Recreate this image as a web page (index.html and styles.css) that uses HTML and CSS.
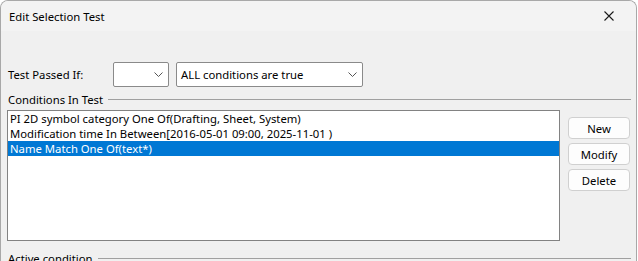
FILE: index.html
```html
<html lang="en">
<head>
    <meta charset="UTF-8">
    <meta name="viewport" content="width=device-width, initial-scale=1.0">
    <title>Edit Selection Test</title>
    <link rel="stylesheet" href="styles.css">
</head>
<body>
    <div class="window">
        <div class="titlebar">
            <span class="title">Edit Selection Test</span>
            <svg class="close" width="10" height="10" viewBox="0 0 10 10">
                <path d="M0.5 0.5 L9.5 9.5 M9.5 0.5 L0.5 9.5" stroke="#1a1a1a" stroke-width="1.1" fill="none"/>
            </svg>
        </div>
        <div class="content">
            <div class="pass-row">
                <span class="label">Test Passed If:</span>
                <div class="combo small">
                    <span class="combo-text"></span>
                    <svg class="chevron" width="9" height="5" viewBox="0 0 9 5"><path d="M0.5 0.5 L4.5 4.5 L8.5 0.5" stroke="#555" fill="none"/></svg>
                </div>
                <div class="combo wide">
                    <span class="combo-text">ALL conditions are true</span>
                    <svg class="chevron" width="9" height="5" viewBox="0 0 9 5"><path d="M0.5 0.5 L4.5 4.5 L8.5 0.5" stroke="#555" fill="none"/></svg>
                </div>
            </div>

            <div class="group-head">
                <span class="group-title">Conditions In Test</span>
                <span class="group-line"></span>
            </div>
            <div class="conditions">
                <div class="listbox">
                    <div class="list-item">PI 2D symbol category One Of(Drafting, Sheet, System)</div>
                    <div class="list-item">Modification time In Between[2016-05-01 09:00, 2025-11-01 )</div>
                    <div class="list-item selected">Name Match One Of(text*)</div>
                </div>
                <div class="actions">
                    <button class="btn">New</button>
                    <button class="btn">Modify</button>
                    <button class="btn">Delete</button>
                </div>
            </div>

            <div class="group-head active">
                <span class="group-title">Active condition</span>
                <span class="group-line"></span>
            </div>
        </div>
    </div>
</body>
</html>
```

FILE: styles.css
```css
body {
    margin: 0;
    padding: 0;
    background-color: #ffffff;
    font-family: "Segoe UI", "Noto Sans", Arial, sans-serif;
    font-size: 11.3px;
    line-height: 15px;
    color: #000000;
    overflow: hidden;
}

.window {
    box-sizing: border-box;
    width: 637px;
    height: 268px;
    border: 1px solid #a8a8a8;
    border-bottom: none;
    border-radius: 8px 8px 0 0;
    background-color: #f0f0f0;
    overflow: hidden;
}

.titlebar {
    height: 30px;
    background-color: #f3f3f3;
    display: flex;
    align-items: center;
    justify-content: space-between;
    padding: 0 22px 0 8px;
}

.title {
    font-size: 11.3px;
    color: #000000;
}

.content {
    padding: 0 5px 0 6px;
}

.pass-row {
    display: flex;
    align-items: center;
    margin-top: 31px;
    height: 25px;
}

.pass-row .label {
    width: 105px;
    padding-left: 1px;
}

.combo {
    box-sizing: border-box;
    height: 25px;
    border: 1px solid #8a8a8a;
    border-radius: 2px;
    background-color: #ffffff;
    display: flex;
    align-items: center;
    justify-content: space-between;
    padding: 0 5px 0 4px;
}

.combo.small {
    width: 56px;
    margin-right: 7px;
}

.combo.wide {
    width: 187px;
}

.chevron {
    flex-shrink: 0;
}

.group-head {
    display: flex;
    align-items: center;
    margin-top: 3px;
    height: 18px;
    gap: 5px;
    padding-left: 1px;
}

.group-line {
    flex: 1;
    height: 1px;
    background-color: #a0a0a0;
}

.conditions {
    display: flex;
    align-items: flex-start;
    margin-top: 2px;
}

.listbox {
    box-sizing: border-box;
    width: 553px;
    height: 131px;
    border: 1px solid #828282;
    background-color: #ffffff;
}

.list-item {
    height: 15px;
    line-height: 15px;
    padding-left: 2px;
    white-space: nowrap;
}

.list-item.selected {
    background-color: #0078d4;
    color: #ffffff;
}

.actions {
    display: flex;
    flex-direction: column;
    gap: 4px;
    margin-left: 8px;
    margin-top: 7px;
}

.btn {
    box-sizing: border-box;
    width: 62px;
    height: 22px;
    border: 1px solid #d0d0d0;
    border-radius: 4px;
    background-color: #fdfdfd;
    font-family: inherit;
    font-size: 11.3px;
    color: #000000;
    padding: 0;
}

.group-head.active {
    margin-top: 8px;
}
```
